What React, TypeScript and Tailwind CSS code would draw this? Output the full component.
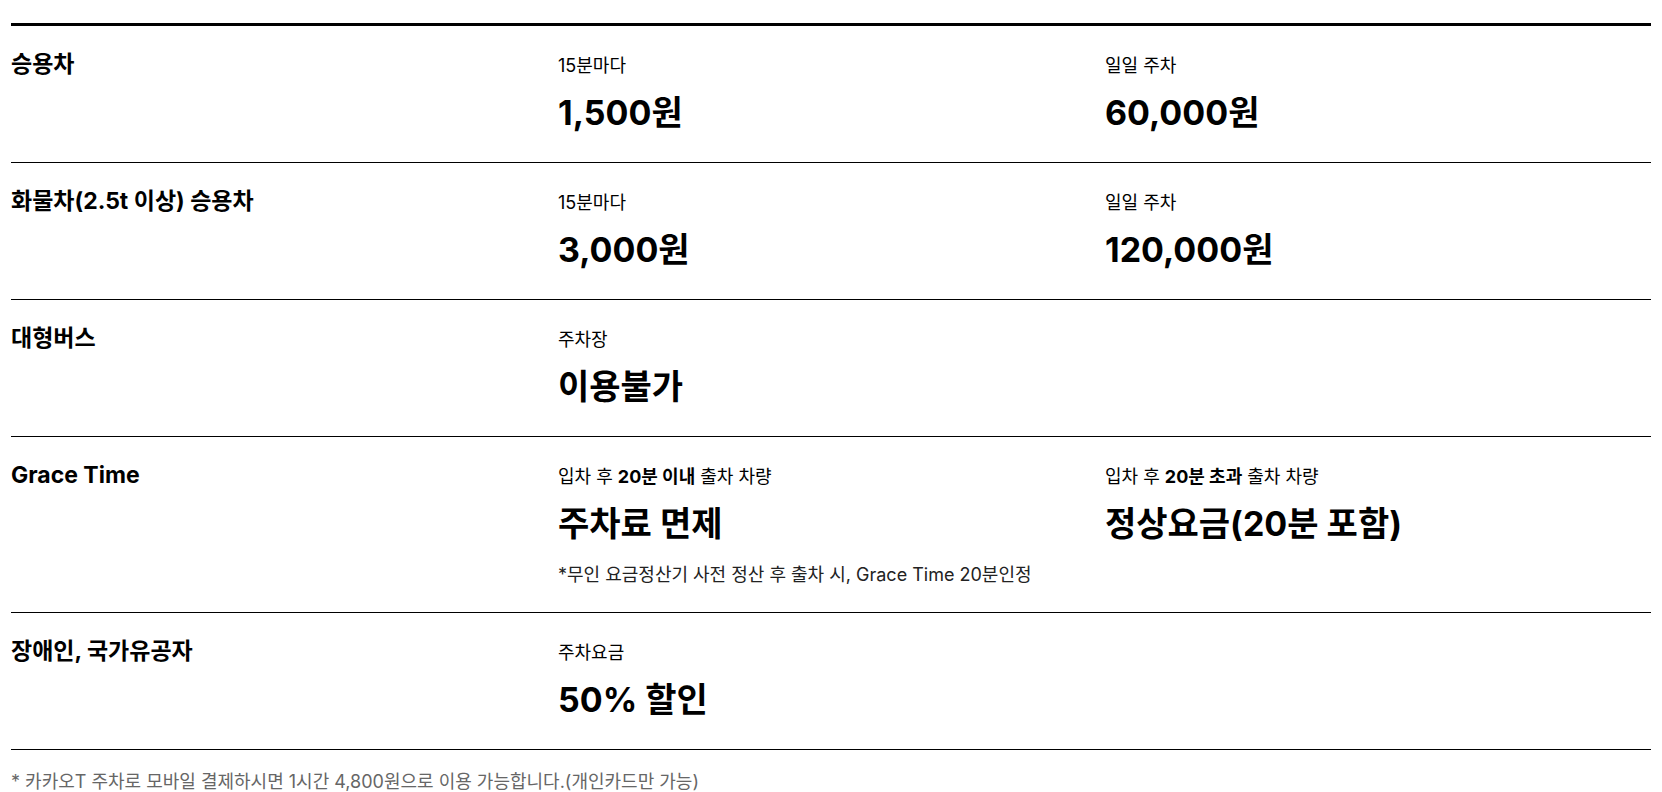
import React from 'react';

type Item = {
  caption: React.ReactNode;
  value: string;
  note?: string;
};

type Row = {
  label: string;
  items: Item[];
};

const rows: Row[] = [
  {
    label: '승용차',
    items: [
      { caption: '15분마다', value: '1,500원' },
      { caption: '일일 주차', value: '60,000원' },
    ],
  },
  {
    label: '화물차(2.5t 이상) 승용차',
    items: [
      { caption: '15분마다', value: '3,000원' },
      { caption: '일일 주차', value: '120,000원' },
    ],
  },
  {
    label: '대형버스',
    items: [{ caption: '주차장', value: '이용불가' }],
  },
  {
    label: 'Grace Time',
    items: [
      {
        caption: (
          <>
            입차 후 <b className="font-bold">20분 이내</b> 출차 차량
          </>
        ),
        value: '주차료 면제',
        note: '*무인 요금정산기 사전 정산 후 출차 시, Grace Time 20분인정',
      },
      {
        caption: (
          <>
            입차 후 <b className="font-bold">20분 초과</b> 출차 차량
          </>
        ),
        value: '정상요금(20분 포함)',
      },
    ],
  },
  {
    label: '장애인, 국가유공자',
    items: [{ caption: '주차요금', value: '50% 할인' }],
  },
];

function FeeItem({ item }: { item: Item }) {
  return (
    <div>
      <div className="text-[18px] leading-[26px] text-black">{item.caption}</div>
      <div className="mt-[14px] text-[34px] leading-[40px] font-bold text-black">
        {item.value}
      </div>
      {item.note && (
        <div className="mt-[20px] -mb-[3px] text-[18px] leading-[22px] text-[#222]">
          {item.note}
        </div>
      )}
    </div>
  );
}

export default function App() {
  return (
    <div
      className="min-h-screen bg-white px-[11px] pt-[23px]"
      style={{ fontFamily: 'Inter, "Noto Sans CJK KR", sans-serif' }}
    >
      <div className="border-t-[3px] border-black">
        {rows.map((row) => (
          <div
            key={row.label}
            className="grid grid-cols-[547px_547px_1fr] border-b border-black pt-[27px] pb-[29px]"
          >
            <div className="-mt-[3px] text-[23px] leading-[28px] font-bold text-black">
              {row.label}
            </div>
            {row.items.map((item, i) => (
              <FeeItem key={i} item={item} />
            ))}
          </div>
        ))}
      </div>
      <p className="mt-[19px] text-[18px] leading-[26px] text-[#666]">
        * 카카오T 주차로 모바일 결제하시면 1시간 4,800원으로 이용 가능합니다.(개인카드만 가능)
      </p>
    </div>
  );
}
